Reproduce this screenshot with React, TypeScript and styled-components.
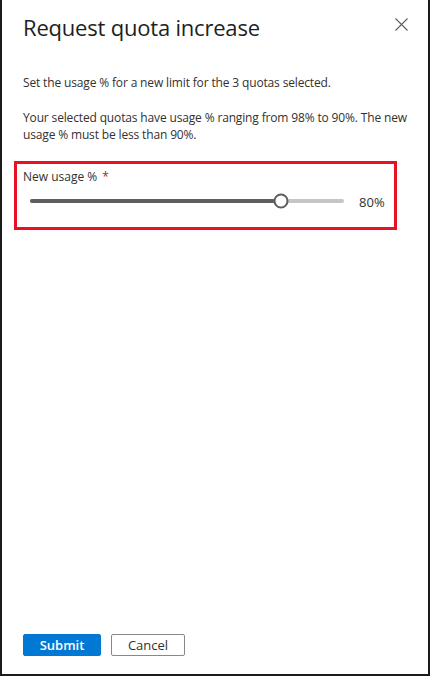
import React from "react";
import styled, { createGlobalStyle } from "styled-components";

const Global = createGlobalStyle`
  html, body { margin: 0; padding: 0; background: #ffffff; }
  body { font-family: "Open Sans", "Noto Sans", sans-serif; color: #323130; }
  * { box-sizing: border-box; }
`;

const Frame = styled.div`
  width: 430px;
  height: 676px;
  border-left: 2px solid #1b1b1b;
  border-right: 2px solid #1b1b1b;
  border-bottom: 2px solid #1b1b1b;
  display: flex;
  flex-direction: column;
  background: #ffffff;
`;

const Header = styled.header`
  display: flex;
  justify-content: space-between;
  align-items: flex-start;
  padding: 12px 20px 0 21px;
`;

const Title = styled.h1`
  margin: 0;
  font-size: 22px;
  line-height: 30px;
  font-weight: 500;
  letter-spacing: -0.2px;
  color: #201f1e;
`;

const CloseButton = styled.button`
  border: none;
  background: none;
  padding: 0;
  margin-top: 5px;
  width: 14px;
  height: 14px;
  display: flex;
  align-items: center;
  justify-content: center;
  cursor: pointer;
`;

const Body = styled.main`
  flex: 1;
  padding: 32px 14px 0 21px;
`;

const Paragraph = styled.p<{ $gap?: number }>`
  margin: 0 0 ${(p) => p.$gap ?? 0}px 0;
  font-size: 12px;
  line-height: 17px;
  letter-spacing: -0.15px;
  color: #323130;
`;

const Highlight = styled.section`
  margin-left: -9px;
  width: 383px;
  border: 3px solid #e81123;
  padding: 4px 0 16px 6px;
`;

const FieldLabel = styled.label`
  display: block;
  font-size: 12px;
  line-height: 17px;
  color: #323130;
`;

const Required = styled.span`
  color: #a4262c;
  margin-left: 5px;
`;

const SliderRow = styled.div`
  display: flex;
  align-items: center;
  height: 20px;
  margin-top: 6px;
  padding-left: 7px;
`;

const Track = styled.div`
  position: relative;
  width: 314px;
  height: 4px;
  border-radius: 2px;
  background: #c8c6c4;
`;

const Fill = styled.div`
  height: 100%;
  border-radius: 2px;
  background: #605e5c;
`;

const Thumb = styled.div`
  position: absolute;
  top: 50%;
  width: 15px;
  height: 15px;
  border-radius: 50%;
  border: 2px solid #605e5c;
  background: #ffffff;
  transform: translate(-50%, -50%);
`;

const ValueLabel = styled.span`
  margin-left: 15px;
  font-size: 13px;
  line-height: 17px;
  font-weight: 500;
  color: #323130;
  margin-top: 2px;
`;

const Footer = styled.footer`
  display: flex;
  gap: 10px;
  padding: 0 0 18px 21px;
`;

const Button = styled.button<{ $primary?: boolean }>`
  height: 22px;
  padding: 0;
  border-radius: 2px;
  font-family: "Open Sans", "Noto Sans", sans-serif;
  font-size: 13px;
  font-weight: ${(p) => (p.$primary ? 600 : 400)};
  border: 1px solid ${(p) => (p.$primary ? "#0078d4" : "#8a8886")};
  background: ${(p) => (p.$primary ? "#0078d4" : "#ffffff")};
  color: ${(p) => (p.$primary ? "#ffffff" : "#323130")};
  cursor: pointer;
`;

const SubmitButton = styled(Button)`
  width: 78px;
`;

const CancelButton = styled(Button)`
  width: 74px;
`;

export default function App() {
  const value = 80;
  return (
    <>
      <Global />
      <Frame>
        <Header>
          <Title>Request quota increase</Title>
          <CloseButton aria-label="Close">
            <svg width="13" height="13" viewBox="0 0 13 13">
              <path d="M0.5 0.5 L12.5 12.5 M12.5 0.5 L0.5 12.5" stroke="#605e5c" strokeWidth="1.1" fill="none" />
            </svg>
          </CloseButton>
        </Header>
        <Body>
          <Paragraph $gap={18}>
            Set the usage % for a new limit for the 3 quotas selected.
          </Paragraph>
          <Paragraph $gap={18}>
            Your selected quotas have usage % ranging from 98% to 90%. The new usage % must be less than 90%.
          </Paragraph>
          <Highlight>
            <FieldLabel>
              New usage %<Required>*</Required>
            </FieldLabel>
            <SliderRow>
              <Track>
                <Fill style={{ width: `${value}%` }} />
                <Thumb style={{ left: `${value}%` }} />
              </Track>
              <ValueLabel>{value}%</ValueLabel>
            </SliderRow>
          </Highlight>
        </Body>
        <Footer>
          <SubmitButton $primary>Submit</SubmitButton>
          <CancelButton>Cancel</CancelButton>
        </Footer>
      </Frame>
    </>
  );
}
